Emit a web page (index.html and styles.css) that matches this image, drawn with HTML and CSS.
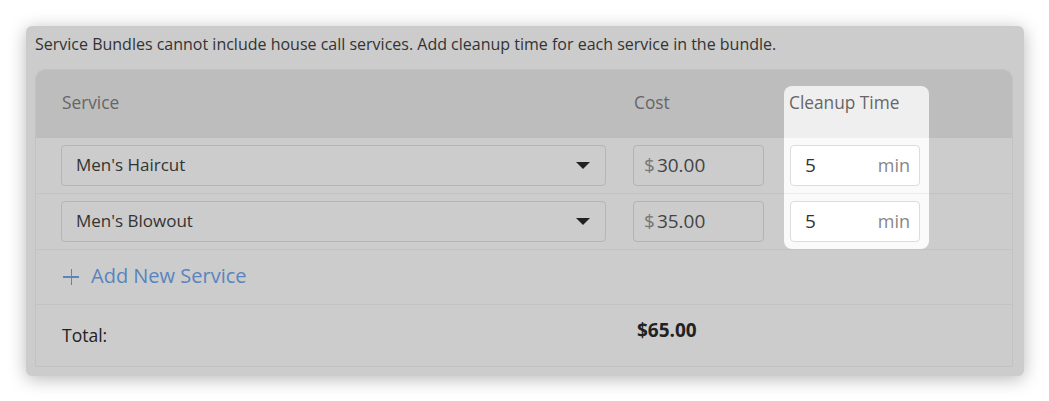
FILE: index.html
```html
<!DOCTYPE html>
<html>
<head>
<meta charset="utf-8">
<link rel="stylesheet" href="styles.css">
</head>
<body>
<div class="page">
  <div class="panel">
    <div class="note">Service Bundles cannot include house call services. Add cleanup time for each service in the bundle.</div>
    <div class="table">
      <div class="row head">
        <div class="label">Service</div>
        <div class="label">Cost</div>
        <div class="spot spot-head"><span class="label-spot">Cleanup Time</span></div>
      </div>
      <div class="row item">
        <div class="cell"><div class="select"><span>Men's Haircut</span><span class="caret"></span></div></div>
        <div class="cell"><div class="cost"><span class="cur">$</span>30.00</div></div>
        <div class="spot spot-mid"><div class="time"><span>5</span><span class="unit">min</span></div></div>
      </div>
      <div class="row item">
        <div class="cell"><div class="select"><span>Men's Blowout</span><span class="caret"></span></div></div>
        <div class="cell"><div class="cost"><span class="cur">$</span>35.00</div></div>
        <div class="spot spot-end"><div class="time"><span>5</span><span class="unit">min</span></div></div>
      </div>
      <div class="row add">
        <span class="plus"></span><span class="add-text">Add New Service</span>
      </div>
      <div class="row total">
        <div class="total-label">Total:</div>
        <div class="total-value">$65.00</div>
      </div>
    </div>
  </div>
</div>
</body>
</html>
```
FILE: styles.css
```css
* { box-sizing: border-box; }
html, body { margin: 0; background: #fff; }
body { font-family: "Open Sans", Lato, sans-serif; color: #333; }
.page { padding: 26px 25px 25px 26px; }
.panel {
  width: 998px; height: 350px;
  background: #cccccc;
  border-radius: 6px;
  box-shadow: 0 3px 18px rgba(0,0,0,0.28);
  padding: 0 11px 9px 9px;
}
.note { height: 36px; line-height: 36px; font-size: 16px; color: #333; margin-bottom: 7px; padding-left: 0; }
.table {
  border: 1px solid #c2c2c2;
  border-radius: 10px 10px 0 0;
  height: 298px;
  display: flex; flex-direction: column;
}
.row {
  display: grid;
  grid-template-columns: 572px 151px 145px;
  padding-left: 25px;
  border-bottom: 1px solid #c3c3c3;
}
.head {
  height: 68px; background: #bdbdbd;
  border-radius: 9px 9px 0 0;
  border-bottom: 0;
}
.label { padding: 23px 0 0 1px; line-height: 20px; font-size: 17.3px; color: #666; }
.spot { background: #fafafa; }
.spot-head {
  align-self: end; height: 52px; background: #efefef;
  border-radius: 8px 8px 0 0; padding: 7px 0 0 5px;
  line-height: 20px; font-size: 17.3px; color: #666;
}
.item { height: 56px; align-items: center; }
.cell { display: flex; align-items: center; }
.spot-mid, .spot-end { height: 55px; display: flex; align-items: center; padding: 0 9px 0 6px; }
.spot-mid { height: 56px; margin-bottom: -1px; border-bottom: 1px solid #ececec; }
.spot-end { border-radius: 0 0 8px 8px; }
.select {
  width: 545px; height: 41px;
  border: 1px solid #b5b5b5; border-radius: 4px;
  display: flex; align-items: center; justify-content: space-between;
  padding: 0 15px 3px 14px; font-size: 17px; color: #333;
}
.caret { width: 0; height: 0; border-left: 7px solid transparent; border-right: 7px solid transparent; border-top: 7px solid #222; margin-top: 3px; }
.cost {
  width: 131px; height: 41px;
  border: 1px solid #b3b3b3; border-radius: 4px;
  display: flex; align-items: center; padding: 0 0 2px 10px;
  font-size: 19px; color: #444;
}
.cur { color: #777; margin-right: 2px; }
.time {
  width: 130px; height: 41px; background: #fff;
  border: 1px solid #dcdcdc; border-radius: 4px;
  display: flex; align-items: center; justify-content: space-between;
  padding: 0 9px 2px 14px; font-size: 19px; color: #333;
}
.unit { color: #888; font-size: 18px; }
.add {
  height: 55px; display: flex; align-items: center; padding: 0 0 3px 27px;
  color: #5a84bf; font-size: 20px;
}
.plus { position: relative; width: 16px; height: 16px; margin-right: 12px; margin-top: 2px; }
.plus::before, .plus::after { content: ""; position: absolute; background: #5a84bf; }
.plus::before { left: 0; right: 0; top: 7.5px; height: 1.5px; }
.plus::after { top: 0; bottom: 0; left: 7.5px; width: 1.5px; }
.total { border-bottom: 0; flex: 1; grid-template-columns: 575px 200px; padding-left: 26px; }
.total-label { padding-top: 18px; font-size: 17.5px; color: #222; }
.total-value { padding-top: 12px; font-size: 19px; font-weight: 700; color: #222; }
```
